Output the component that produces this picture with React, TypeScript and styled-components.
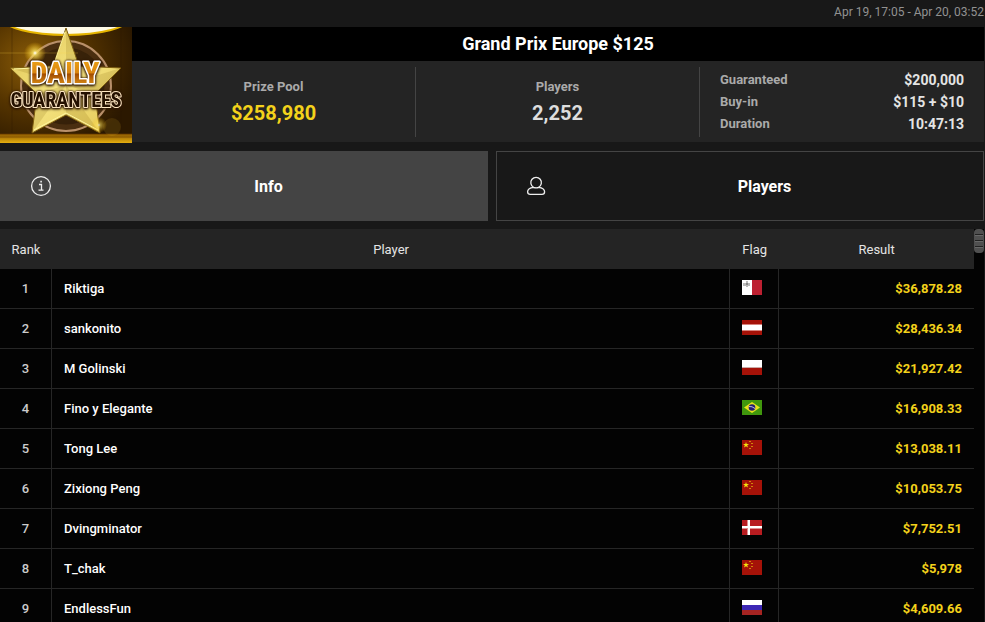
import React, { useState } from "react";
import styled, { createGlobalStyle } from "styled-components";

const GlobalStyle = createGlobalStyle`
  *, *::before, *::after { box-sizing: border-box; }
  body {
    margin: 0;
    background: #181818;
    color: #fff;
    font-family: Roboto, "Liberation Sans", sans-serif;
    font-size: 13px;
  }
`;

const Page = styled.main`
  display: flex;
  flex-direction: column;
  gap: 8px;
  height: 100vh;
  padding-right: 1px;
  overflow: hidden;
`;

const DateBar = styled.div`
  height: 27px;
  margin-bottom: -8px;
  color: #929292;
  font-size: 12px;
  line-height: 24px;
  text-align: right;
`;

const Header = styled.header`
  display: flex;
  align-items: flex-start;
`;

const Banner = styled.svg`
  display: block;
  flex: none;
  width: 132px;
  height: 116px;
`;

const BannerText = styled.text`
  font-family: "Roboto Condensed", "Liberation Sans Narrow", "Liberation Sans", sans-serif;
  font-weight: 700;
  text-anchor: middle;
  paint-order: stroke;
  stroke-linejoin: round;
  filter: drop-shadow(0 0 1px #2b1400) drop-shadow(0 1px 1px #2b1400);
`;

const Summary = styled.div`
  flex: 1;
  min-width: 0;
`;

const Title = styled.h1`
  margin: 0;
  background: #000;
  font-size: 18px;
  font-weight: 700;
  line-height: 34px;
  text-align: center;
`;

const Stats = styled.div`
  display: grid;
  grid-template-columns: repeat(3, 1fr);
  padding: 6px 0 5px;
  background: #242424;
`;

const Stat = styled.div`
  height: 70px;
  padding-top: 10px;
  border-right: 1px solid #444;
  text-align: center;
`;

const StatLabel = styled.div`
  color: #aaa;
  font-weight: 700;
  line-height: 20px;
`;

const StatValue = styled.div<{ $gold?: boolean }>`
  color: ${(p) => (p.$gold ? "#f3d21b" : "#ddd")};
  font-size: 20px;
  font-weight: 700;
  line-height: 32px;
`;

const Details = styled.dl`
  margin: 0;
  padding: 2px 20px;
`;

const Detail = styled.div`
  display: flex;
  justify-content: space-between;
  line-height: 22px;
  font-weight: 700;

  dt { color: #aaa; }
  dd { margin: 0; color: #e4e4e4; font-size: 14px; }
`;

const Tabs = styled.nav`
  display: grid;
  grid-template-columns: 1fr 1fr;
  gap: 8px;
`;

const Tab = styled.button<{ $active: boolean }>`
  display: flex;
  align-items: center;
  height: 70px;
  padding: 0 2px 0 29px;
  border: 1px solid #444;
  background: ${(p) => (p.$active ? "#444" : "#181818")};
  color: #fff;
  font-family: inherit;
  font-size: 16px;
  font-weight: 700;
  cursor: pointer;
`;

const TabIcon = styled.svg`
  flex: none;
  width: 22px;
  height: 22px;
  fill: none;
  stroke: #eee;
  stroke-width: 1.3;
`;

const TabText = styled.span`
  flex: 1;
  text-align: center;
`;

const Results = styled.section`
  display: flex;
  flex: 1;
  min-height: 0;
  background: #030303;
`;

const Scroller = styled.div`
  flex: 1;
  overflow-y: auto;
  scrollbar-width: none;
`;

const Table = styled.table`
  width: 100%;
  table-layout: fixed;
  border-collapse: separate;
  border-spacing: 0;
`;

const Col = styled.col<{ $width?: string }>`
  width: ${(p) => p.$width ?? "auto"};
`;

const HeadCell = styled.th`
  height: 40px;
  padding: 0;
  background: #242424;
  color: #e4e4e4;
  font-weight: 400;
  text-align: center;
`;

const Cell = styled.td<{ $align?: string }>`
  height: 40px;
  padding: 0 12px;
  border-right: 1px solid #262626;
  border-bottom: 1px solid #262626;
  font-weight: 500;
  text-align: ${(p) => p.$align ?? "left"};
`;

const RankCell = styled(Cell)`
  color: #ccc;
`;

const ResultCell = styled(Cell)`
  border-right: 0;
  color: #f3d21b;
  font-weight: 700;
`;

const FlagArt = styled.svg`
  display: block;
  width: 20px;
  height: 15px;
  margin-top: -2px;
`;

const Track = styled.div`
  flex: none;
  width: 10px;
`;

const Thumb = styled.svg`
  display: block;
  width: 10px;
  height: 24px;
`;

type Country = "mt" | "lv" | "pl" | "br" | "cn" | "dk" | "ru";

const names: Record<Country, string> = {
  mt: "Malta",
  lv: "Latvia",
  pl: "Poland",
  br: "Brazil",
  cn: "China",
  dk: "Denmark",
  ru: "Russia",
};

const drawings: Record<Country, React.ReactNode> = {
  mt: (
    <>
      <path fill="#fff" d="M0 0h10v15H0z" />
      <path fill="#bd2031" d="M10 0h10v15H10z" />
      <path fill="#bbb" d="M4 1h2v2h2v3H6v1H4V6H1V3h3z" />
      <path fill="#888" d="M4 3h2v2H4z" />
    </>
  ),
  lv: (
    <>
      <path fill="#a51208" d="M0 0h20v15H0z" />
      <path fill="#d6817b" d="M0 4h20v7H0z" />
      <path fill="#fff" d="M0 5h20v5H0z" />
    </>
  ),
  pl: (
    <>
      <path fill="#fff" d="M0 0h20v8H0z" />
      <path fill="#a51208" d="M0 8h20v7H0z" />
      <path fill="#c9aaa6" d="M0 7h20v1H0z" />
    </>
  ),
  br: (
    <>
      <path fill="#40970d" d="M0 0h20v15H0z" />
      <path fill="#e9e31b" d="M10 2l8 5.5-8 5.5-8-5.5z" />
      <circle cx="10" cy="7.500" r="3.300" fill="#241f72" />
      <path fill="none" stroke="#b8bcd8" d="M7 6.500q3-.5 6 2" />
    </>
  ),
  cn: (
    <>
      <path fill="#a51208" d="M0 0h20v15H0z" />
      <path fill="#f5e50d" d="M4 2l.7 2H7L5.200 5.300 6 7.500 4 6.200 2 7.500l.8-2.200L1 4h2.300z" />
      <path fill="#d0860b" d="M7 1h2v1H7zM9 3h2v1H9zM9 6h2v1H9zM7 8h2v1H7z" />
    </>
  ),
  dk: (
    <>
      <path fill="#b81c20" d="M0 0h20v15H0z" />
      <path fill="#df8e90" d="M5 0h3v15H5zM0 6h20v3H0z" />
      <path fill="#fff" d="M6 0h2v15H6zM0 6h20v2H0z" />
    </>
  ),
  ru: (
    <>
      <path fill="#fff" d="M0 0h20v5H0z" />
      <path fill="#3c27b5" d="M0 5h20v5H0z" />
      <path fill="#a52422" d="M0 10h20v5H0z" />
    </>
  ),
};

function Flag({ country }: { country: Country }) {
  return (
    <FlagArt viewBox="0 0 20 15" role="img" aria-label={names[country]}>
      {drawings[country]}
    </FlagArt>
  );
}

const players: { name: string; country: Country; result: string }[] = [
  { name: "Riktiga", country: "mt", result: "$36,878.28" },
  { name: "sankonito", country: "lv", result: "$28,436.34" },
  { name: "M Golinski", country: "pl", result: "$21,927.42" },
  { name: "Fino y Elegante", country: "br", result: "$16,908.33" },
  { name: "Tong Lee", country: "cn", result: "$13,038.11" },
  { name: "Zixiong Peng", country: "cn", result: "$10,053.75" },
  { name: "Dvingminator", country: "dk", result: "$7,752.51" },
  { name: "T_chak", country: "cn", result: "$5,978" },
  { name: "EndlessFun", country: "ru", result: "$4,609.66" },
];

function DailyGuarantees() {
  return (
    <Banner viewBox="0 0 132 116" role="img" aria-label="Daily Guarantees">
      <defs>
        <radialGradient id="glow" cx=".25" cy=".3" r=".8">
          <stop offset="0" stopColor="#8a5c08" />
          <stop offset=".5" stopColor="#553400" />
          <stop offset="1" stopColor="#2b1800" />
        </radialGradient>
        <linearGradient id="star" x1="0" x2="1" y1="0" y2="1">
          <stop offset="0" stopColor="#dcc050" />
          <stop offset=".5" stopColor="#f5e480" />
          <stop offset="1" stopColor="#e2c655" />
        </linearGradient>
        <linearGradient id="floor" x2="0" y2="1">
          <stop offset="0" stopColor="#8b5800" />
          <stop offset="1" stopColor="#e6b010" />
        </linearGradient>
        <linearGradient id="daily" x2="0" y2="1">
          <stop offset="0" stopColor="#f3ac16" />
          <stop offset=".5" stopColor="#d98510" />
          <stop offset=".55" stopColor="#a34d00" />
          <stop offset="1" stopColor="#f4ad22" />
        </linearGradient>
        <radialGradient id="spark">
          <stop offset="0" stopColor="#fff" />
          <stop offset=".2" stopColor="#ffe765" stopOpacity=".8" />
          <stop offset="1" stopColor="#ffbf00" stopOpacity="0" />
        </radialGradient>
      </defs>
      <path fill="url(#glow)" d="M0 0h132v116H0z" />
      <path stroke="#2b1800" strokeOpacity=".3" d="M12 0v106M121 0v106" />
      <ellipse cx="66" cy="-8" rx="62" ry="16" fill="#fffbe8" stroke="#e6b500" strokeWidth="2" />
      <path fill="url(#floor)" d="M0 107h132v9H0z" />
      <path stroke="#6a3e00" strokeOpacity=".6" d="M0 107h132M0 110h132" />
      <circle cx="66" cy="59" r="42" fill="#35200a" fillOpacity=".9" stroke="#4a2e10" strokeWidth="7" />
      <circle cx="66" cy="59" r="45" fill="none" stroke="#b9906a" strokeWidth="2" />
      <path
        fill="url(#star)"
        stroke="#7a5a10"
        d="M66 1L79 39l42 2L95 67l5 39-34-18-34 18 5-39L10 41l43-2z"
      />
      <path fill="#8f7218" fillOpacity=".2" d="M66 1v57l13-19zM121 41L66 58l29 9zM100 106L66 58v30zM32 106l34-48-29 9zM10 41l56 17-13-19z" />
      <path fill="none" stroke="#fff6a0" d="M65 5L53 40l-39 2M34 103l32-17 32 17" />
      <path stroke="#ffd84a" strokeOpacity=".25" d="M0 26h78" />
      <circle cx="35" cy="26" r="11" fill="url(#spark)" />
      <circle cx="99" cy="98" r="8" fill="url(#spark)" opacity=".7" />
      <circle cx="112" cy="100" r="9" fill="#f4c32b" fillOpacity=".12" />
      <BannerText x="65" y="56" fontSize="30" fill="url(#daily)" stroke="#fff" strokeWidth="3">
        DAILY
      </BannerText>
      <BannerText x="66" y="80" fontSize="20" fill="#241000" stroke="#ffe8c4" strokeWidth="2">
        GUARANTEES
      </BannerText>
    </Banner>
  );
}

function InfoIcon() {
  return (
    <TabIcon viewBox="0 0 22 22" aria-hidden="true">
      <circle cx="11" cy="11" r="9.400" />
      <path d="M9 9.500h2.500V15M8.500 15.200h5" />
      <path d="M10.300 6.700h1.600" strokeWidth="1.700" />
    </TabIcon>
  );
}

function PlayerIcon() {
  return (
    <TabIcon viewBox="0 0 22 22" aria-hidden="true">
      <path d="M7.600 12.300a5.300 5.300 0 1 1 5 0c3.500.4 6 2.200 6 4.500 0 1.800-1 2.600-2.600 2.600H4.200c-1.600 0-2.600-.8-2.600-2.600 0-2.300 2.500-4.100 6-4.500q2.500 1 5 0" />
    </TabIcon>
  );
}

export default function App() {
  const [tab, setTab] = useState("info");
  return (
    <>
      <GlobalStyle />
      <Page>
        <DateBar>Apr 19, 17:05 - Apr 20, 03:52</DateBar>
        <Header>
          <DailyGuarantees />
          <Summary>
            <Title>Grand Prix Europe $125</Title>
            <Stats>
              <Stat>
                <StatLabel>Prize Pool</StatLabel>
                <StatValue $gold>$258,980</StatValue>
              </Stat>
              <Stat>
                <StatLabel>Players</StatLabel>
                <StatValue>2,252</StatValue>
              </Stat>
              <Details>
                <Detail><dt>Guaranteed</dt><dd>$200,000</dd></Detail>
                <Detail><dt>Buy-in</dt><dd>$115 + $10</dd></Detail>
                <Detail><dt>Duration</dt><dd>10:47:13</dd></Detail>
              </Details>
            </Stats>
          </Summary>
        </Header>
        <Tabs>
          <Tab type="button" $active={tab === "info"} onClick={() => setTab("info")}>
            <InfoIcon />
            <TabText>Info</TabText>
          </Tab>
          <Tab type="button" $active={tab === "players"} onClick={() => setTab("players")}>
            <PlayerIcon />
            <TabText>Players</TabText>
          </Tab>
        </Tabs>
        <Results>
          <Scroller>
            <Table>
              <colgroup>
                <Col $width="52px" />
                <Col />
                <Col $width="49px" />
                <Col $width="20%" />
              </colgroup>
              <thead>
                <tr>
                  <HeadCell scope="col">Rank</HeadCell>
                  <HeadCell scope="col">Player</HeadCell>
                  <HeadCell scope="col">Flag</HeadCell>
                  <HeadCell scope="col">Result</HeadCell>
                </tr>
              </thead>
              <tbody>
                {players.map((player, index) => (
                  <tr key={player.name}>
                    <RankCell $align="center">{index + 1}</RankCell>
                    <Cell>{player.name}</Cell>
                    <Cell><Flag country={player.country} /></Cell>
                    <ResultCell $align="right">{player.result}</ResultCell>
                  </tr>
                ))}
              </tbody>
            </Table>
          </Scroller>
          <Track>
            <Thumb viewBox="0 0 10 24" aria-hidden="true">
              <rect width="10" height="24" rx="4" fill="#505050" />
              <path stroke="#222" d="M1 5.500h8M1 11.500h8M1 17.500h8" />
              <path stroke="#686868" d="M1 6.500h8M1 12.500h8M1 18.500h8" />
            </Thumb>
          </Track>
        </Results>
      </Page>
    </>
  );
}
